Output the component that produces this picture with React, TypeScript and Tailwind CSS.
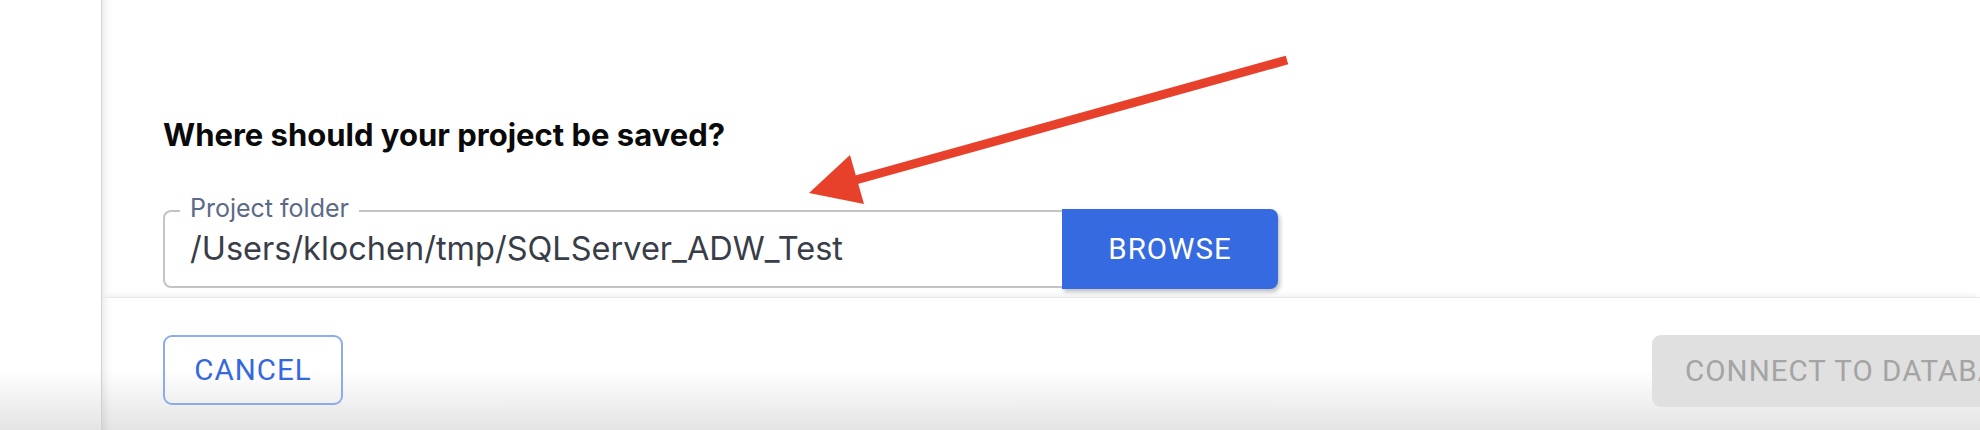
import React from 'react';

const inter = { fontFamily: 'Inter, "Noto Sans", sans-serif' };
const roboto = { fontFamily: 'Roboto, "Liberation Sans", sans-serif' };

// Red annotation arrow drawn over the dialog
function Arrow() {
    return (
        <svg className="pointer-events-none absolute inset-0" width="1980" height="430" viewBox="0 0 1980 430">
            <line x1="1287" y1="60" x2="852" y2="181" stroke="#E8412B" strokeWidth="9" />
            <polygon points="809,193 850,155 864,204" fill="#E8412B" />
        </svg>
    );
}

export default function App() {
    return (
        <div className="relative flex h-[430px] w-[1980px] overflow-hidden bg-linear-to-b from-white from-[86%] to-[#e4e4e4]" style={inter}>
            <div className="w-[101px] shrink-0" />
            <div className="flex min-w-0 flex-1 flex-col border-l border-[#d2d2d2] shadow-[inset_10px_0_10px_-8px_rgba(0,0,0,0.10)]">
                {/* content */}
                <div className="flex h-[297px] shrink-0 flex-col pl-[61px]">
                    <h2 className="mt-[117px] text-[31px] leading-[36px] font-bold text-[#0a0a0a]">
                        Where should your project be saved?
                    </h2>
                    <div className="mt-[56px] flex items-center">
                        <div className="relative flex h-[78px] w-[899px] items-center rounded-l-[8px] border-2 border-r-0 border-[#c4c4c4] bg-white pl-[25px]">
                            <span className="absolute left-[15px] top-[-16px] bg-white px-[10px] text-[25px] leading-[24px] text-[#5b6a86]">
                                Project folder
                            </span>
                            <span className="text-[32.5px] leading-[44px] text-[#383d48]">/Users/klochen/tmp/SQLServer_ADW_Test</span>
                        </div>
                        <button
                            className="flex h-[80px] w-[216px] items-center justify-center rounded-r-[8px] bg-[#366ae0] text-[29.5px] font-normal tracking-[0.035em] text-white shadow-[2px_3px_4px_rgba(0,0,0,0.25)]"
                            style={roboto}
                        >
                            BROWSE
                        </button>
                    </div>
                </div>
                {/* footer */}
                <div className="flex flex-1 items-start border-t border-[#e8e8e8] pl-[61px] pt-[37px] shadow-[0_-5px_6px_-3px_rgba(0,0,0,0.06)]" style={roboto}>
                    <button className="flex h-[70px] w-[180px] shrink-0 items-center justify-center rounded-[9px] border-2 border-[#8eacea] text-[29.5px] tracking-[0.035em] text-[#3568de]">
                        CANCEL
                    </button>
                    <button className="ml-[1309px] flex h-[72px] shrink-0 items-center whitespace-nowrap rounded-[9px] bg-[#e0e0e0] px-[33px] text-[29.5px] tracking-[0.035em] text-[#a4a4a4]">
                        CONNECT TO DATABASE
                    </button>
                </div>
            </div>
            <Arrow />
        </div>
    );
}
